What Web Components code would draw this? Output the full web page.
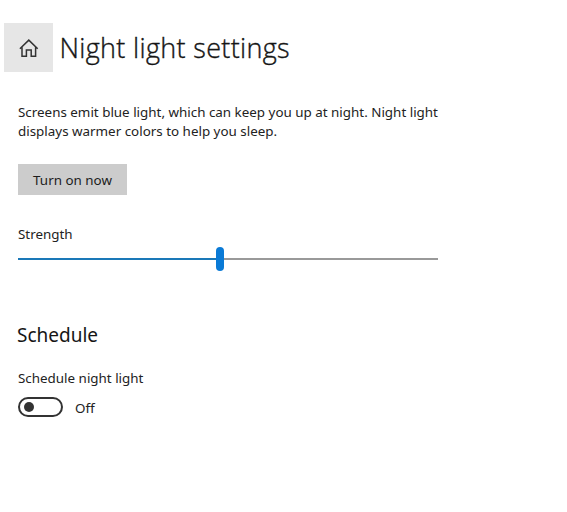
<!DOCTYPE html>
<html lang="en">
<head>
<meta charset="utf-8">
<title>Night light settings</title>
<style>
  html, body {
    margin: 0;
    background: #fff;
  }

  body {
    font-family: "Noto Sans", "Open Sans", sans-serif;
    font-size: 13.4px;
    line-height: 18px;
    color: #222;
  }
</style>
</head>
<body>
<night-light-page></night-light-page>

<script>
/**
 * Attach an open shadow root and fill it with the given markup.
 * @param {HTMLElement} host
 * @param {string} html
 */
function render(host, html) {
  if (host.shadowRoot) return;
  host.attachShadow({ mode: 'open' }).innerHTML = html;
}

/** Home tile followed by the page title. */
class PageHeader extends HTMLElement {
  connectedCallback() {
    render(this, `
      <style>
        :host {
          display: flex;
          align-items: center;
          height: 49px;
          padding: 23px 0 0 4px;
        }
        .home {
          display: flex;
          align-items: center;
          justify-content: center;
          width: 49px;
          height: 49px;
          background: #e6e6e6;
        }
        h1 {
          margin: 0 0 0 6.5px;
          font: 300 27px/36px "Open Sans", "Noto Sans", sans-serif;
          letter-spacing: 0.33px;
          -webkit-text-stroke: 0.35px #151515;
          color: #151515;
          white-space: nowrap;
        }
      </style>
      <div class="home">
        <svg width="20" height="20" viewBox="0 0 20 20" fill="none" stroke="#333" stroke-width="1.5">
          <path d="M.9 10.8 9.8 2.1l8.9 8.7M3 9.2v9.1h4.4v-6.4h4.8v6.4h4.4V9.2"/>
        </svg>
      </div>
      <h1><slot></slot></h1>
    `);
  }
}

/** Flat grey push button. */
class FlatButton extends HTMLElement {
  connectedCallback() {
    render(this, `
      <style>
        :host {
          display: block;
          width: 109px;
          height: 31px;
        }
        button {
          width: 100%;
          height: 100%;
          padding: 0;
          border: 0;
          background: #ccc;
          color: #1c1c1c;
          font: inherit;
        }
      </style>
      <button type="button"><slot></slot></button>
    `);
  }
}

/** Horizontal slider, position given by the value attribute (0-100). */
class StrengthSlider extends HTMLElement {
  connectedCallback() {
    const value = parseFloat(this.getAttribute('value')) || 0;

    render(this, `
      <style>
        :host {
          display: flex;
          align-items: center;
          width: 420px;
          height: 24px;
        }
        .filled {
          width: calc((100% - 8px) * ${value / 100});
          height: 2px;
          background: #1a78b8;
        }
        .thumb {
          flex: none;
          width: 8px;
          height: 24px;
          border-radius: 4px;
          background: #0a7ad6;
        }
        .rest {
          flex: 1;
          height: 2px;
          background: #999;
        }
      </style>
      <div class="filled"></div><div class="thumb"></div><div class="rest"></div>
    `);
  }
}

/** Toggle switch in its off state, with a text label. */
class ToggleSwitch extends HTMLElement {
  connectedCallback() {
    render(this, `
      <style>
        :host {
          display: flex;
          align-items: center;
          gap: 12px;
          height: 20px;
        }
        .track {
          box-sizing: border-box;
          display: flex;
          align-items: center;
          width: 45px;
          height: 20px;
          padding-left: 3.5px;
          border: 2px solid #333;
          border-radius: 10px;
        }
        .knob {
          width: 10px;
          height: 10px;
          border-radius: 50%;
          background: #333;
        }
        .label {
          padding-top: 2px;
        }
      </style>
      <div class="track"><div class="knob"></div></div>
      <span class="label"><slot></slot></span>
    `);
  }
}

class NightLightPage extends HTMLElement {
  connectedCallback() {
    render(this, `
      <style>
        :host {
          display: block;
          height: 512px;
          overflow: hidden;
        }
        main {
          padding: 31px 0 0 18px;
        }
        p, h2 {
          margin: 0;
          white-space: nowrap;
        }
        .intro {
          line-height: 18.5px;
        }
        flat-button {
          margin-top: 24px;
        }
        .strength {
          margin-top: 30px;
        }
        strength-slider {
          margin-top: 4px;
        }
        h2 {
          margin: 50px 0 0 -1px;
          font: 400 19px/28px "Noto Sans", "Open Sans", sans-serif;
          color: #151515;
        }
        .schedule {
          margin-top: 20px;
        }
        toggle-switch {
          margin-top: 10px;
        }
      </style>
      <page-header>Night light settings</page-header>
      <main>
        <p class="intro">Screens emit blue light, which can keep you up at night. Night light<br>displays warmer colors to help you sleep.</p>
        <flat-button>Turn on now</flat-button>
        <p class="strength">Strength</p>
        <strength-slider value="48"></strength-slider>
        <h2>Schedule</h2>
        <p class="schedule">Schedule night light</p>
        <toggle-switch>Off</toggle-switch>
      </main>
    `);
  }
}

customElements.define('page-header', PageHeader);
customElements.define('flat-button', FlatButton);
customElements.define('strength-slider', StrengthSlider);
customElements.define('toggle-switch', ToggleSwitch);
customElements.define('night-light-page', NightLightPage);
</script>
</body>
</html>
